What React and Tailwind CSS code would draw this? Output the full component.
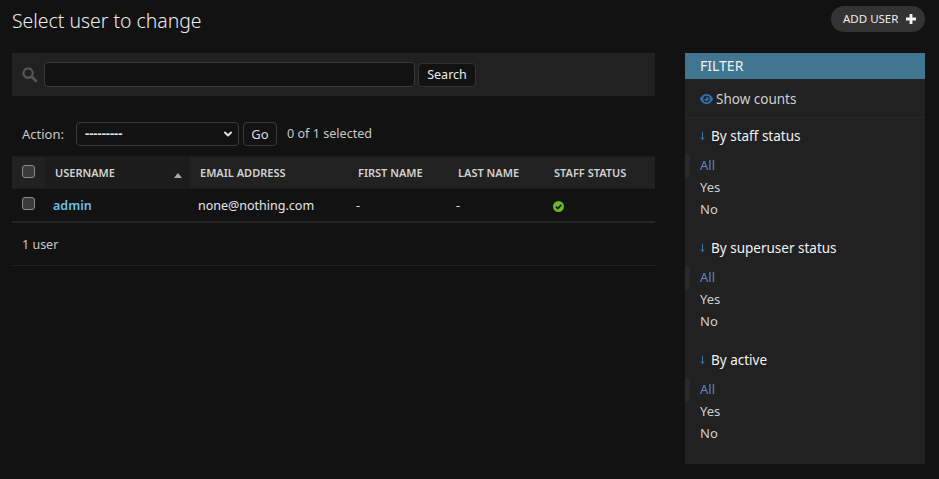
import { ChevronDown } from 'lucide-react';

const font = 'font-["Noto_Sans",sans-serif]';

const columns = [
  { label: 'EMAIL ADDRESS', width: 'w-[158px]' },
  { label: 'FIRST NAME', width: 'w-[100px]' },
  { label: 'LAST NAME', width: 'w-[96px]' },
  { label: 'STAFF STATUS', width: 'flex-1' },
];

const filters = [
  { title: 'By staff status' },
  { title: 'By superuser status' },
  { title: 'By active' },
];

function Checkbox() {
  return <span className="block h-[13px] w-[13px] rounded-[3px] border border-[#8a8a8a] bg-[#3b3b3b]" />;
}

function SearchIcon() {
  return (
    <svg viewBox="0 0 16 16" className="h-[15px] w-[15px]" fill="none" stroke="#555" strokeWidth="2.4">
      <circle cx="6.5" cy="6.5" r="5" />
      <path d="M10.2 10.2 15 15" strokeLinecap="round" strokeWidth="3" />
    </svg>
  );
}

function EyeIcon() {
  return (
    <svg viewBox="0 0 576 512" className="h-[12px] w-[13px]" fill="#2f6fb5">
      <path d="M288 32C207 32 142 69 95 112 48 156 17 208 2 244c-3 8-3 17 0 25 15 36 46 88 93 132 47 44 112 79 193 79s146-35 193-79c47-44 78-96 93-132 3-8 3-17 0-25-15-36-46-88-93-132C434 69 369 32 288 32zM144 256a144 144 0 1 1 288 0 144 144 0 1 1-288 0zm144-64c0 35-29 64-64 64-7 0-14-1-20-3-6-2-12 2-12 8 0 7 2 14 3 21 14 51 67 82 118 68s82-67 68-118c-11-42-48-69-89-71-6 0-9 6-7 12 2 6 3 12 3 19z" />
    </svg>
  );
}

function CheckIcon() {
  return (
    <svg viewBox="0 0 14 14" className="h-[11px] w-[11px]">
      <circle cx="7" cy="7" r="7" fill="#6cb62a" />
      <path d="M3.6 7.2 6 9.6l4.5-4.7" fill="none" stroke="#141414" strokeWidth="2" />
    </svg>
  );
}

function FilterGroup({ title }) {
  return (
    <div className="mb-[15px]">
      <h3 className="flex h-[22px] items-center pl-[15px] pt-[2px] text-[13.5px] text-[#f2f2f2]">
        <svg viewBox="0 0 6 10" className="mr-[6px] h-[10px] w-[5px]" fill="none" stroke="#3f7fb8" strokeWidth="1">
          <path d="M3 0v9M1 6.500 3 9.500l2-3" />
        </svg>
        {title}
      </h3>
      <ul className="mt-[9px] text-[13px] text-[#cfcfcf]">
        <li className="flex h-[22px] items-center border-l-[5px] border-[#2a2a2a] pl-[10px] text-[#5f86bd]">All</li>
        <li className="flex h-[22px] items-center pl-[15px]">Yes</li>
        <li className="flex h-[22px] items-center pl-[15px]">No</li>
      </ul>
    </div>
  );
}

export default function App() {
  return (
    <div className={`${font} h-[479px] overflow-hidden bg-[#121212] px-[12px] text-[#e6e6e6]`}>
      <header className="flex h-[53px] items-start justify-between">
        <h1 className="mt-[8px] text-[19.4px] leading-[26px] font-light text-[#ececec]">Select user to change</h1>
        <button className="mr-[2px] mt-[6px] flex h-[26px] w-[94px] items-center gap-[8px] rounded-full bg-[#333] pl-[12px] text-[11.5px] text-[#ececec]">
          ADD USER
          <svg viewBox="0 0 12 12" className="h-[10px] w-[10px]" fill="#f2f2f2">
            <path d="M4.3 0h3.4v4.3H12v3.4H7.700V12H4.300V7.700H0V4.300h4.300z" />
          </svg>
        </button>
      </header>

      <div className="flex items-start justify-between pr-[2px]">
        <main className="w-[643px]">
          <div className="flex h-[43px] items-center bg-[#212121] pl-[10px]">
            <SearchIcon />
            <input className="ml-[7px] h-[25px] w-[371px] rounded-[4px] border border-[#3a3a3a] bg-[#121212]" />
            <button className="ml-[3px] h-[24px] w-[58px] rounded-[4px] border border-[#333] bg-[#121212] pt-[2px] text-[12.5px] text-[#ececec]">
              Search
            </button>
          </div>

          <div className="mt-[26px] flex h-[24px] items-center pl-[10px] text-[13px] text-[#c8c8c8]">
            <span className="w-[54px] pt-[2px]">Action:</span>
            <div className="flex h-[24px] w-[163px] items-center justify-between rounded-[4px] border border-[#3a3a3a] pl-[8px] pr-[4px]">
              <span className="text-[13px] font-bold text-[#e6e6e6]">---------</span>
              <ChevronDown size={12} strokeWidth={4} color="#e0e0e0" />
            </div>
            <button className="ml-[4px] h-[24px] w-[34px] rounded-[4px] border border-[#3a3a3a] pt-[2px] text-[#dcdcdc]">Go</button>
            <span className="ml-[10px] text-[12.6px]">0 of 1 selected</span>
          </div>

          <div className="mt-[10px] flex h-[33px] border-y border-[#1b1b1b] bg-[#212121] text-[11px] font-semibold text-[#d2d2d2]">
            <div className="flex w-[33px] items-center justify-center pb-[3px]">
              <Checkbox />
            </div>
            <div className="relative flex w-[145px] items-center bg-[#1c1c1c] pl-[10px] pt-[2px]">
              USERNAME
              <span className="absolute right-[8px] top-[16px] h-0 w-0 border-x-[4px] border-b-[5px] border-x-transparent border-b-[#aaa]" />
            </div>
            {columns.map((c) => (
              <div key={c.label} className={`flex items-center pl-[10px] pt-[2px] ${c.width}`}>
                {c.label}
              </div>
            ))}
          </div>

          <div className="flex h-[34px] items-center border-b-2 border-[#262626] text-[12.5px] text-[#e6e6e6]">
            <div className="flex w-[33px] justify-center pb-[3px]">
              <Checkbox />
            </div>
            <a className="w-[145px] pl-[8px] pt-[2px] font-semibold text-[#70bfe6]">admin</a>
            <span className="w-[158px] pl-[8px] pt-[2px]">none@nothing.com</span>
            <span className="w-[100px] pl-[8px] pt-[2px]">-</span>
            <span className="w-[96px] pl-[8px] pt-[2px]">-</span>
            <span className="pl-[9px] pt-[2px]">
              <CheckIcon />
            </span>
          </div>

          <p className="flex h-[43px] items-center border-b border-[#222] pl-[10px] pt-[2px] text-[12.5px] text-[#c8c8c8]">1 user</p>
        </main>

        <aside className="h-[411px] w-[240px] bg-[#212121]">
          <h2 className="flex h-[26px] items-center bg-[#417690] pb-[1px] pl-[15px] text-[14px] text-[#f0f0f0]">FILTER</h2>
          <div className="flex h-[39px] items-center gap-[3px] border-b border-[#2a2a2a] pl-[15px] pt-[2px] text-[13.5px] text-[#cfcfcf]">
            <EyeIcon />
            Show counts
          </div>
          <div className="pt-[6px]">
            {filters.map((f) => (
              <FilterGroup key={f.title} title={f.title} />
            ))}
          </div>
        </aside>
      </div>
    </div>
  );
}
